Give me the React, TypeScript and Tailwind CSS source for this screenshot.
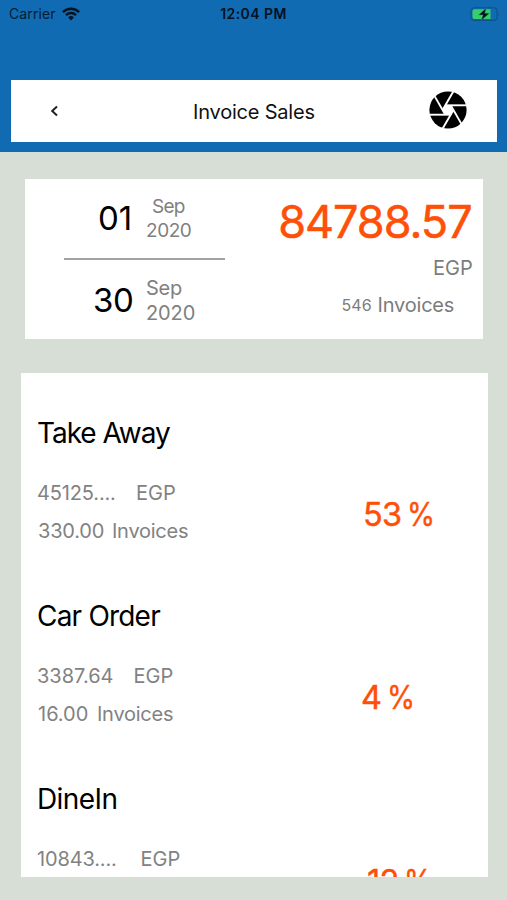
import React from "react";

type Channel = {
  name: string;
  nameStyle: string;
  amount: string;
  amountStyle: string;
  invoices?: string;
  invoicesStyle?: string;
  percent: string;
  percentStyle: string;
};

const channels: Channel[] = [
  {
    name: "Take Away",
    nameStyle: "tracking-[-1.05px]",
    amount: "45125....",
    amountStyle: "w-[99px] tracking-[-0.15px]",
    invoices: "330.00",
    invoicesStyle: "w-[74px] tracking-[-0.2px]",
    percent: "53",
    percentStyle: "pl-[343px]",
  },
  {
    name: "Car Order",
    nameStyle: "tracking-[-0.8px]",
    amount: "3387.64",
    amountStyle: "w-[96.5px] tracking-[0px]",
    invoices: "16.00",
    invoicesStyle: "w-[59px] tracking-[0px]",
    percent: "4",
    percentStyle: "pl-[341px]",
  },
  {
    name: "DineIn",
    nameStyle: "tracking-[-0.6px]",
    amount: "10843....",
    amountStyle: "w-[103.5px] tracking-[-0.15px]",
    percent: "12",
    percentStyle: "pl-[347px] pt-px",
  },
];

function StatusBar() {
  return (
    <div className="grid h-7 grid-cols-3 items-center text-[#061c30]">
      <div className="flex items-center pl-[9px]">
        <span className="w-[52px] text-[14px] leading-7 tracking-[0.1px]">Carrier</span>
        <svg className="h-[14px] w-[20px]" viewBox="0 0 20 14" fill="none">
          <path d="M1.9 5.1A11.3 11.3 0 0 1 18.1 5.1" stroke="#061422" strokeWidth="2.5" />
          <path d="M5 8.1A7 7 0 0 1 15 8.1" stroke="#061422" strokeWidth="2.3" />
          <path d="M10 13.5 7.1 10.5A4.1 4.1 0 0 1 12.9 10.5Z" fill="#061422" />
        </svg>
      </div>
      <div className="whitespace-nowrap text-center text-[14px] font-semibold leading-7 tracking-[0.45px] text-[#05111d]">
        12:04 PM
      </div>
      <div className="flex justify-end pr-[6px]">
        <svg className="h-[15px] w-[31px]" viewBox="0 0 31 15">
          <rect x="1" y="0.8" width="26" height="12.6" rx="3.5" fill="none" stroke="#0c5288" strokeWidth="1.1" />
          <path d="M4.5 2.3H20.5V12H4.5A2 2 0 0 1 2.5 10V4.3A2 2 0 0 1 4.5 2.3Z" fill="#35cf6b" />
          <path d="M28.6 5Q30.4 7.2 28.6 9.4Z" fill="#0c5288" />
          <path d="M16.2 1 8.6 8H13L11.2 13.4 19.4 6.3H14.8Z" fill="#04121f" stroke="#2f9f7a" strokeWidth="0.4" />
        </svg>
      </div>
    </div>
  );
}

function Aperture() {
  return (
    <svg className="h-[38px] w-[38px] -translate-y-px" viewBox="0 0 38 38">
      <circle cx="19" cy="19" r="18.6" fill="#000" />
      <path d="M16.3 14.3H21.7L24.4 19 21.7 23.7H16.3L13.6 19Z" fill="#fff" />
      <g stroke="#fff" strokeWidth="1.9">
        <path d="M16.3 14.3H38" />
        <path d="M21.7 14.3 32.55 33.1" />
        <path d="M24.4 19 13.55 37.8" />
        <path d="M21.7 23.7H0" />
        <path d="M16.3 23.7 5.45 4.9" />
        <path d="M13.6 19 24.45 0.2" />
      </g>
    </svg>
  );
}

function DateRow({ day, dayStyle, children }: { day: string; dayStyle: string; children: React.ReactNode }) {
  return (
    <div className="flex">
      <span className={"shrink-0 whitespace-nowrap text-black " + dayStyle}>{day}</span>
      <div className="flex flex-col whitespace-nowrap text-[#808080]">{children}</div>
    </div>
  );
}

function Summary() {
  return (
    <section className="ml-[25px] mt-[27px] flex h-[160.5px] w-[457.7px] bg-white">
      <div className="w-[200px] shrink-0 pt-[15.5px]">
        <DateRow day="01" dayStyle="w-[121px] pl-[73px] text-[33px] leading-[49px]">
          <span className="mt-[0.5px] pl-[6px] text-[19px] leading-[24.5px] tracking-[-0.7px]">Sep</span>
          <span className="-mb-[0.5px] text-[19px] leading-[24.5px] tracking-[-0.45px]">2020</span>
        </DateRow>
        <div className="ml-[39px] mt-[14.5px] h-[2px] w-[161px] bg-[#a2a2a2]" />
        <DateRow day="30" dayStyle="mt-[16px] w-[121px] pl-[68px] text-[33px] leading-[49px] tracking-[-0.5px]">
          <span className="mt-[16px] text-[20px] leading-[25px] tracking-[-0.3px]">Sep</span>
          <span className="text-[20px] leading-[25px] tracking-[-0.1px]">2020</span>
        </DateRow>
      </div>
      <div className="flex grow flex-col items-end whitespace-nowrap text-[#7c7c7c]">
        <span className="mt-[13px] pr-[11px] text-[45px] leading-[60px] tracking-[-1px] text-[#ff5008] [-webkit-text-stroke:0.5px_#ff5008]">
          84788.57
        </span>
        <span className="mt-[1.5px] pr-[10px] text-[20px] leading-[30px] tracking-[0px]">EGP</span>
        <div className="mt-[7px] flex pr-[28.5px] leading-[30px]">
          <span className="w-[36px] text-[16px]">546</span>
          <span className="text-[20px] tracking-[-0.2px]">Invoices</span>
        </div>
      </div>
    </section>
  );
}

function ChannelRow({ c }: { c: Channel }) {
  return (
    <div className="h-[183px] shrink-0 whitespace-nowrap pl-[16.5px] text-[20px] text-[#828282]">
      <h2 className={"pt-[40px] text-[28px] leading-[40px] text-black " + c.nameStyle}>{c.name}</h2>
      <div className="mt-[25px] grid leading-[30px]">
        <div className="col-start-1 row-start-1">
          <div className="flex">
            <span className={"shrink-0 " + c.amountStyle}>{c.amount}</span>
            <span>EGP</span>
          </div>
          {c.invoices && (
            <div className="mt-[8px] flex pl-px">
              <span className={"shrink-0 " + c.invoicesStyle}>{c.invoices}</span>
              <span className="tracking-[-0.25px]">Invoices</span>
            </div>
          )}
        </div>
        <div
          className={
            "col-start-1 row-start-1 -ml-[17px] mt-[17px] flex gap-[5.5px] text-[32.5px] leading-[40px] tracking-[-0.7px] text-[#ff4f06] [-webkit-text-stroke:0.4px_#ff4f06] " +
            c.percentStyle
          }
        >
          <span>{c.percent}</span>
          <span className="origin-left scale-x-[0.88]">%</span>
        </div>
      </div>
    </div>
  );
}

export default function App() {
  return (
    <main className="h-[900px] w-[507px] overflow-hidden bg-[#d6ded6] font-[Inter,'Liberation_Sans',sans-serif]">
      <header className="h-[151.5px] bg-[#116bb3]">
        <StatusBar />
        <div className="ml-[11px] mt-[52px] flex h-[62px] w-[486px] items-center bg-white">
          <svg className="ml-[39px] h-[12px] w-[9px]" viewBox="0 0 9 12" fill="none">
            <path d="M7 1.5 2.2 6 7 10.5" stroke="#222" strokeWidth="2" />
          </svg>
          <h1 className="ml-[134px] w-[236px] whitespace-nowrap pt-px text-[20px] leading-[30px] tracking-[-0.2px] text-[#111]">
            Invoice Sales
          </h1>
          <Aperture />
        </div>
      </header>
      <Summary />
      <section className="ml-[20.5px] mt-[34px] flex h-[504px] w-[467px] flex-col overflow-hidden bg-white">
        {channels.map((c) => (
          <ChannelRow key={c.name} c={c} />
        ))}
      </section>
    </main>
  );
}
